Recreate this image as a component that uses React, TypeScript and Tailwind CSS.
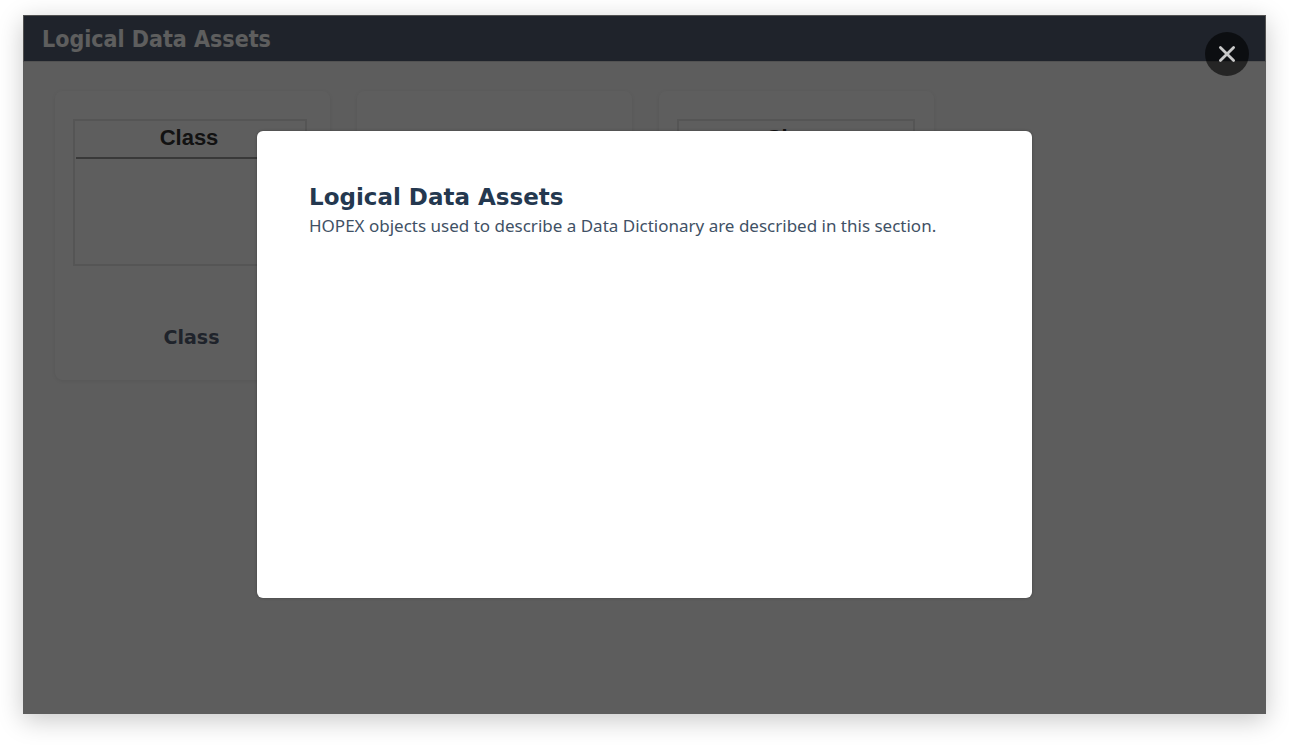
import { useState } from "react";

type Asset = { name?: string; shapeClass?: string };

const assets: Asset[] = [
  { name: "Class", shapeClass: "w-[234px]" },
  {},
  { name: "Class", shapeClass: "w-[238px]" },
];

function AssetCard({ name, shapeClass }: Asset) {
  return (
    <article className="flex h-[289px] w-[275px] flex-col rounded-lg bg-white pr-5 pl-[18px] pt-7 shadow-[0_1px_4px_rgba(0,0,0,0.07)]">
      {name && (
        <>
          <div className={`h-[147px] border-2 border-[#e6e6e6] ${shapeClass}`}>
            <div className="mx-px h-[38px] border-b-2 border-[#9a9a9a] pr-0.5 text-center font-['Liberation_Sans',sans-serif] text-[22px] leading-[34px] font-bold text-[#333333]">
              {name}
            </div>
          </div>
          <h2 className="mt-[57px] text-center font-['DejaVu_Sans',sans-serif] text-[19px] leading-7 font-bold text-[#546174]">
            {name}
          </h2>
        </>
      )}
    </article>
  );
}

export default function App() {
  const [open, setOpen] = useState(true);

  return (
    <div className="flex min-h-screen bg-white px-[23px] pt-[15px] pb-[31px]">
      <div className="relative flex flex-1 flex-col bg-[#fbfbfb] shadow-[0_6px_24px_rgba(0,0,0,0.22)]">
        <header className="h-[47px] border border-[#dddddd] bg-[#546174] px-[18px]">
          <h1 className="font-['DejaVu_Sans_Condensed','DejaVu_Sans',sans-serif] text-[23px] leading-[46px] font-bold text-white">
            Logical Data Assets
          </h1>
        </header>
        <main className="flex flex-wrap gap-[27px] px-8 pt-[29px]">
          {assets.map((asset, i) => (
            <AssetCard key={i} {...asset} />
          ))}
        </main>

        {open && (
          <div className="absolute inset-0 flex items-center justify-center bg-black/63">
            <section
              role="dialog"
              aria-modal="true"
              aria-labelledby="dialog-title"
              className="min-h-[467px] w-full max-w-[775px] rounded-md bg-white px-[52px] pt-[50px] text-[#24384f] shadow-[0_0_3px_rgba(0,0,0,0.3)]"
            >
              <h2 id="dialog-title" className="font-['DejaVu_Sans',sans-serif] text-[23px] leading-8 font-bold">
                Logical Data Assets
              </h2>
              <p className="font-['Noto_Sans','DejaVu_Sans',sans-serif] text-[17px] leading-[26px] text-[#3f5165]">
                HOPEX objects used to describe a Data Dictionary are described in this section.
              </p>
            </section>
            <button
              type="button"
              aria-label="Close"
              onClick={() => setOpen(false)}
              className="absolute top-[17px] right-[17px] flex size-11 items-center justify-center rounded-full bg-black/60"
            >
              <svg viewBox="0 0 18 18" className="size-[18px]" fill="none" stroke="#c9c9c9" strokeWidth="2.8" strokeLinecap="round">
                <path d="M2.4 2.4 15.6 15.6M15.6 2.4 2.4 15.6" />
              </svg>
            </button>
          </div>
        )}
      </div>
    </div>
  );
}
